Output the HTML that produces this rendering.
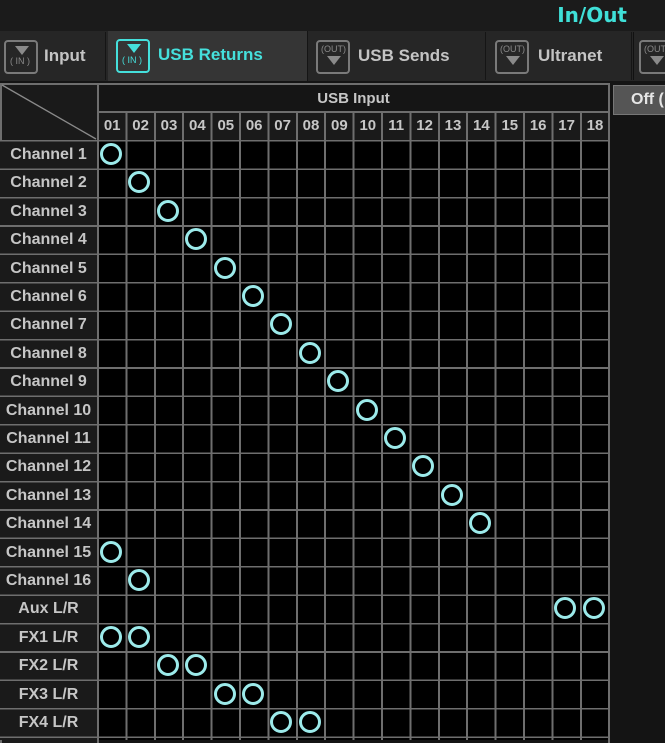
<!DOCTYPE html>
<html><head><meta charset="utf-8"><style>
*{margin:0;padding:0;box-sizing:border-box}
body{width:665px;height:738px;background:#141414;position:relative;overflow:hidden;font-family:"Liberation Sans",sans-serif;font-weight:bold}
.top{position:absolute;left:0;top:0;width:665px;height:31px;background:#1b1b1b}
.title{position:absolute;right:38px;top:3px;color:#3fe0d8;font-size:20px;font-family:"DejaVu Sans",sans-serif;font-weight:bold}
.tabbar{position:absolute;left:0;top:31px;width:665px;height:50px;background:#262626}
.tab{position:absolute;top:1px;height:48px;background:#262626;color:#c4c4c4;font-size:17px;line-height:48px;border-right:1px solid #151515}
.tab.act{background:#353535;color:#45e0dc;top:0;height:50px}
.ic{position:absolute;top:8px;width:34px;height:34px;border:2px solid #7a7a7a;border-radius:4px}
.act .ic{border-color:#45e0dc}
.ic .t{position:absolute;left:9px;width:0;height:0;border-left:7px solid transparent;border-right:7px solid transparent;border-top:9px solid #8a8a8a}
.act .ic .t{border-top-color:#45e0dc}
.ic .l{position:absolute;font-size:9px;line-height:10px;font-weight:normal;color:#8a8a8a}
.act .ic .l{color:#45e0dc}
.lab{position:absolute;left:0;width:97px;height:28.4px;line-height:28.4px;text-align:center;color:#c6c6c6;font-size:16px}
.num{position:absolute;top:111px;width:28.4px;height:29px;line-height:30px;text-align:center;color:#c6c6c6;font-size:15px}
.c{position:absolute;width:22px;height:22px;border:3px solid #9ceaea;border-radius:50%}
</style></head><body>
<div class="top"></div><div class="title">In/Out</div>
<div class="tabbar">
 <div class="tab" style="left:0;width:106px"><div class="ic" style="left:4px"><div class="t" style="top:4px"></div><div class="l" style="left:4px;top:14px">(&nbsp;IN&nbsp;)</div></div><span style="position:absolute;left:44px">Input</span></div>
 <div class="tab act" style="left:108px;width:200px"><div class="ic" style="left:8px;top:8px"><div class="t" style="top:3px"></div><div class="l" style="left:4px;top:14px">(&nbsp;IN&nbsp;)</div></div><span style="position:absolute;left:50px">USB Returns</span></div>
 <div class="tab" style="left:310px;width:176px"><div class="ic" style="left:6px"><div class="l" style="left:3px;top:2px">(OUT)</div><div class="t" style="top:14px"></div></div><span style="position:absolute;left:48px">USB Sends</span></div>
 <div class="tab" style="left:488px;width:144px"><div class="ic" style="left:7px"><div class="l" style="left:3px;top:2px">(OUT)</div><div class="t" style="top:14px"></div></div><span style="position:absolute;left:50px">Ultranet</span></div>
 <div class="tab" style="left:633px;width:40px;border-left:1px solid #111"><div class="ic" style="left:5px"><div class="l" style="left:3px;top:2px">(OUT)</div><div class="t" style="top:14px"></div></div></div>
</div>
<div style="position:absolute;left:0;top:83px;width:97px;height:660px;background:#1a1a1a;border-top:2px solid #6e6e6e;border-left:2px solid #6e6e6e"></div>
<div style="position:absolute;left:0;top:140px;width:97px;height:600px;background:repeating-linear-gradient(180deg,#6e6e6e 0 1.6px,#1a1a1a 1.6px 28.4px)"></div>
<svg style="position:absolute;left:0;top:83px" width="97" height="57"><line x1="2" y1="2" x2="96" y2="56" stroke="#8a8a8a" stroke-width="1.3"/></svg>
<div style="position:absolute;left:97px;top:83px;width:513px;height:28px;background:#151515;border:2px solid #6e6e6e;border-bottom:none;color:#c6c6c6;font-size:15px;text-align:center;line-height:28px">USB Input</div>
<div style="position:absolute;left:97px;top:111px;width:513px;height:29px;background:repeating-linear-gradient(90deg,#6e6e6e 0 2px,#1a1a1a 2px 28.4px);border-top:2px solid #6e6e6e"></div>
<div style="position:absolute;left:97px;top:140px;width:513px;height:600px;background:repeating-linear-gradient(90deg,#6e6e6e 0 2px,transparent 2px 28.4px),repeating-linear-gradient(180deg,#6e6e6e 0 1.6px,#000 1.6px 28.4px)"></div>
<div style="position:absolute;left:608px;top:83px;width:2px;height:660px;background:#6e6e6e"></div>
<div style="position:absolute;left:97px;top:83px;width:2px;height:660px;background:#6e6e6e"></div>
<div class="num" style="left:98px">01</div><div class="num" style="left:126.4px">02</div><div class="num" style="left:154.8px">03</div><div class="num" style="left:183.2px">04</div><div class="num" style="left:211.6px">05</div><div class="num" style="left:240px">06</div><div class="num" style="left:268.4px">07</div><div class="num" style="left:296.8px">08</div><div class="num" style="left:325.2px">09</div><div class="num" style="left:353.6px">10</div><div class="num" style="left:382px">11</div><div class="num" style="left:410.4px">12</div><div class="num" style="left:438.8px">13</div><div class="num" style="left:467.2px">14</div><div class="num" style="left:495.6px">15</div><div class="num" style="left:524px">16</div><div class="num" style="left:552.4px">17</div><div class="num" style="left:580.8px">18</div>
<div class="lab" style="top:141px">Channel 1</div><div class="lab" style="top:169.4px">Channel 2</div><div class="lab" style="top:197.8px">Channel 3</div><div class="lab" style="top:226.2px">Channel 4</div><div class="lab" style="top:254.6px">Channel 5</div><div class="lab" style="top:283px">Channel 6</div><div class="lab" style="top:311.4px">Channel 7</div><div class="lab" style="top:339.8px">Channel 8</div><div class="lab" style="top:368.2px">Channel 9</div><div class="lab" style="top:396.6px">Channel 10</div><div class="lab" style="top:425px">Channel 11</div><div class="lab" style="top:453.4px">Channel 12</div><div class="lab" style="top:481.8px">Channel 13</div><div class="lab" style="top:510.2px">Channel 14</div><div class="lab" style="top:538.6px">Channel 15</div><div class="lab" style="top:567px">Channel 16</div><div class="lab" style="top:595.4px">Aux L/R</div><div class="lab" style="top:623.8px">FX1 L/R</div><div class="lab" style="top:652.2px">FX2 L/R</div><div class="lab" style="top:680.6px">FX3 L/R</div><div class="lab" style="top:709px">FX4 L/R</div>
<div class="c" style="left:100px;top:143px"></div>
<div class="c" style="left:128.4px;top:171.4px"></div>
<div class="c" style="left:156.8px;top:199.8px"></div>
<div class="c" style="left:185.2px;top:228.2px"></div>
<div class="c" style="left:213.6px;top:256.6px"></div>
<div class="c" style="left:242px;top:285px"></div>
<div class="c" style="left:270.4px;top:313.4px"></div>
<div class="c" style="left:298.8px;top:341.8px"></div>
<div class="c" style="left:327.2px;top:370.2px"></div>
<div class="c" style="left:355.6px;top:398.6px"></div>
<div class="c" style="left:384px;top:427px"></div>
<div class="c" style="left:412.4px;top:455.4px"></div>
<div class="c" style="left:440.8px;top:483.8px"></div>
<div class="c" style="left:469.2px;top:512.2px"></div>
<div class="c" style="left:100px;top:540.6px"></div>
<div class="c" style="left:128.4px;top:569px"></div>
<div class="c" style="left:554.4px;top:597.4px"></div>
<div class="c" style="left:582.8px;top:597.4px"></div>
<div class="c" style="left:100px;top:625.8px"></div>
<div class="c" style="left:128.4px;top:625.8px"></div>
<div class="c" style="left:156.8px;top:654.2px"></div>
<div class="c" style="left:185.2px;top:654.2px"></div>
<div class="c" style="left:213.6px;top:682.6px"></div>
<div class="c" style="left:242px;top:682.6px"></div>
<div class="c" style="left:270.4px;top:711px"></div>
<div class="c" style="left:298.8px;top:711px"></div>
<div style="position:absolute;left:613px;top:85px;width:60px;height:30px;background:#555;border:1px solid #777;color:#e6e6e6;font-size:16px;line-height:28px;padding-left:17px">Off (</div>
</body></html>
